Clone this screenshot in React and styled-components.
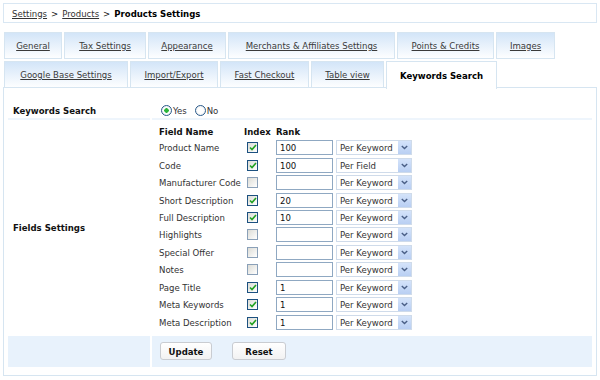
import React from 'react';
import styled, {createGlobalStyle} from 'styled-components';

const Global = createGlobalStyle`
    body{margin:0;background:#fff;}
    *{box-sizing:border-box;}
`
const Page = styled.div`
    width:600px;
    height:380px;
    padding:3px 3px 0 3px;
    font-family:"DejaVu Sans Condensed","DejaVu Sans",Verdana,sans-serif;
    font-stretch:condensed;
    font-size:9.5px;
    color:#333;
`
const Crumbs = styled.div`
    height:20px;
    border:1px solid #d9e7f3;
    padding-left:8px;
    display:flex;
    align-items:center;
    color:#111;
    a{color:#333;text-decoration:underline;}
    b{color:#000;}
    span{margin:0 4px;}
`
const Tabs = styled.div`
    margin-top:9px;
    padding-left:1px;
    display:flex;
    flex-direction:column;
    gap:2px;
`
const TabRow = styled.div`
    display:flex;
    gap:2px;
    height:27px;
`
const Tab = styled.div`
    width:${p => p.$w}px;
    height:${p => p.$active ? 28 : 27}px;
    border:1px solid #d6e5f1;
    border-bottom:${p => p.$active ? 'none' : '1px solid #d6e5f1'};
    background:${p => p.$active ? '#fff' : 'linear-gradient(#d3e5f8, #fdfeff)'};
    display:flex;
    align-items:center;
    justify-content:center;
    color:${p => p.$active ? '#000' : '#3a3a3a'};
    font-weight:${p => p.$active ? 'bold' : 'normal'};
    text-decoration:${p => p.$active ? 'none' : 'underline'};
    position:relative;
    z-index:1;
`
const Panel = styled.div`
    margin-top:-1px;
    border:1px solid #d6e5f1;
    padding:4px 4px 8px 4px;
    display:grid;
    grid-template-columns:142px 1fr;
    column-gap:2px;
    row-gap:2px;
`
const LabelCell = styled.div`
    padding:${p => p.$pad || '0 5px'};
    display:flex;
    align-items:center;
    font-weight:bold;
    color:#111;
    border-bottom:${p => p.$line ? '2px solid #eef5fc' : 'none'};
    background:${p => p.$bar ? '#e8f2fc' : 'transparent'};
    height:${p => p.$h ? p.$h + 'px' : 'auto'};
`
const ValueCell = styled.div`
    padding:${p => p.$pad || '0 7px'};
    display:flex;
    align-items:center;
    gap:${p => p.$gap || 0}px;
    border-bottom:${p => p.$line ? '2px solid #eef5fc' : 'none'};
    background:${p => p.$bar ? '#e8f2fc' : 'transparent'};
    height:${p => p.$h ? p.$h + 'px' : 'auto'};
`
const RadioLabel = styled.label`
    display:flex;
    align-items:center;
    gap:1px;
    margin-right:8px;
`
const RadioDot = styled.span`
    width:11px;
    height:11px;
    border-radius:50%;
    border:1px solid #2a5a8a;
    background:radial-gradient(circle, ${p => p.$on ? '#2bb53a 0, #2bb53a 2px,' : ''} #fff 2.5px, #e2e6ea 100%);
`
const FieldGrid = styled.div`
    display:grid;
    grid-template-columns:85px 32px 60px 76px;
    grid-auto-rows:17.46px;
    grid-template-rows:15px;
    align-items:center;
    padding-top:2px;
    padding-bottom:3px;
`
const Head = styled.div`
    font-weight:bold;
    color:#111;
`
const Check = styled.span`
    width:11px;
    height:11px;
    margin-left:3px;
    border:1px solid ${p => p.$on ? '#1c5180' : '#8aa0b8'};
    background:linear-gradient(135deg,#dcdcd6,#fff);
    display:flex;
    align-items:center;
    justify-content:center;
`
const TextBox = styled.div`
    width:57px;
    height:15px;
    border:1px solid #8fa8c2;
    background:#fff;
    padding-left:3px;
    display:flex;
    align-items:center;
    color:#111;
`
const Select = styled.div`
    width:76px;
    height:15px;
    border:1px solid #cfdbea;
    background:#fff;
    display:flex;
    align-items:center;
    justify-content:space-between;
    padding-left:3px;
    color:#333;
`
const Arrow = styled.span`
    width:13px;
    height:13px;
    background:linear-gradient(#d4e3fa,#b9cff3);
    display:flex;
    align-items:center;
    justify-content:center;
`
const Button = styled.button`
    height:18px;
    width:${p => p.$w}px;
    border:1px solid #c9ccd1;
    border-radius:3px;
    background:linear-gradient(#fff,#f2f2f2);
    font:inherit;
    font-weight:bold;
    color:#111;
    padding:0;
`

const tabRows = [
    [['General',58],['Tax Settings',82],['Appearance',78],['Merchants & Affiliates Settings',167],['Points & Credits',97],['Images',59]],
    [['Google Base Settings',124],['Import/Export',88],['Fast Checkout',89],['Table view',73],['Keywords Search',111,true]],
];

const fields = [
    ['Product Name',true,'100','Per Keyword'],
    ['Code',true,'100','Per Field'],
    ['Manufacturer Code',false,'','Per Keyword'],
    ['Short Description',true,'20','Per Keyword'],
    ['Full Description',true,'10','Per Keyword'],
    ['Highlights',false,'','Per Keyword'],
    ['Special Offer',false,'','Per Keyword'],
    ['Notes',false,'','Per Keyword'],
    ['Page Title',true,'1','Per Keyword'],
    ['Meta Keywords',true,'1','Per Keyword'],
    ['Meta Description',true,'1','Per Keyword'],
];

function Tick(){
    return (
        <svg width="8" height="7" viewBox="0 0 8 7">
            <path d="M1 3.5 L3 5.5 L7 1" stroke="#21a121" strokeWidth="1.6" fill="none"/>
        </svg>);
}

function Chevron(){
    return (
        <svg width="7" height="5" viewBox="0 0 7 5">
            <path d="M0.8 1 L3.5 3.6 L6.2 1" stroke="#4a5f86" strokeWidth="1.4" fill="none"/>
        </svg>);
}

export default function App(){
    return (
        <Page>
            <Global/>
            <Crumbs>
                <a>Settings</a><span>&gt;</span><a>Products</a><span>&gt;</span><b>Products Settings</b>
            </Crumbs>
            <Tabs>
                {tabRows.map((row,i) =>
                    <TabRow key={i}>
                        {row.map(([name,w,active]) =>
                            <Tab key={name} $w={w} $active={active}>{name}</Tab>)}
                    </TabRow>)}
            </Tabs>
            <Panel>
                <LabelCell $line $pad="10px 5px 0 5px" $h={28}>Keywords Search</LabelCell>
                <ValueCell $line $pad="10px 7px 0 9px" $h={28}>
                    <RadioLabel><RadioDot $on/>Yes</RadioLabel>
                    <RadioLabel><RadioDot/>No</RadioLabel>
                </ValueCell>
                <LabelCell>Fields Settings</LabelCell>
                <ValueCell>
                    <FieldGrid>
                        <Head>Field Name</Head>
                        <Head>Index</Head>
                        <Head>Rank</Head>
                        <div/>
                        {fields.map(([name,on,rank,mode]) =>
                            <React.Fragment key={name}>
                                <div>{name}</div>
                                <div><Check $on={on}>{on && <Tick/>}</Check></div>
                                <TextBox>{rank}</TextBox>
                                <Select>{mode}<Arrow><Chevron/></Arrow></Select>
                            </React.Fragment>)}
                    </FieldGrid>
                </ValueCell>
                <LabelCell $bar $h={31}/>
                <ValueCell $bar $h={31} $gap={20} $pad="0 8px">
                    <Button $w={52}>Update</Button>
                    <Button $w={54}>Reset</Button>
                </ValueCell>
            </Panel>
        </Page>);
}
